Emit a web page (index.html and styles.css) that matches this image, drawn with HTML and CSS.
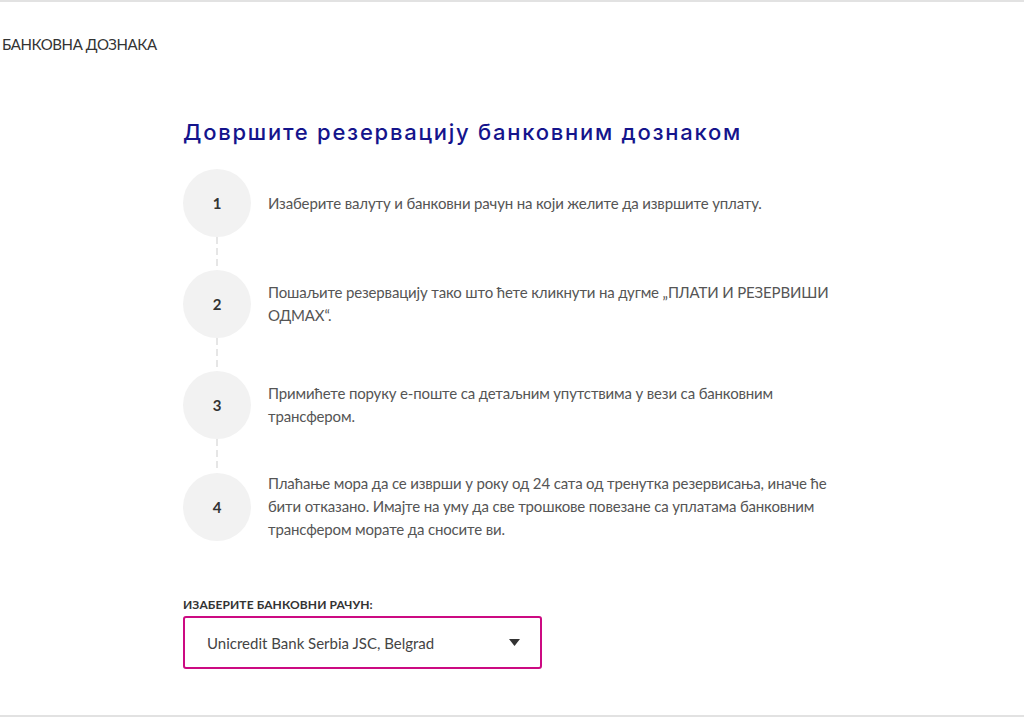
FILE: index.html
```html
<!DOCTYPE html>
<html lang="sr">
<head>
<meta charset="utf-8">
<title>Банковна дозника</title>
<link rel="stylesheet" href="styles.css">
</head>
<body>
<div class="page">
  <div class="tab-title">БАНКОВНА ДОЗНАКА</div>
  <main class="content">
    <h1 class="heading">Довршите резервацију банковним дознаком</h1>
    <div class="steps">
      <div class="step">
        <div class="circle">1</div>
        <p class="step-text">Изаберите валуту и банковни рачун на који желите да извршите уплату.</p>
      </div>
      <div class="connector"></div>
      <div class="step">
        <div class="circle">2</div>
        <p class="step-text">Пошаљите резервацију тако што ћете кликнути на дугме „ПЛАТИ И РЕЗЕРВИШИ ОДМАХ“.</p>
      </div>
      <div class="connector"></div>
      <div class="step">
        <div class="circle">3</div>
        <p class="step-text">Примићете поруку е-поште са детаљним упутствима у вези са банковним трансфером.</p>
      </div>
      <div class="connector"></div>
      <div class="step">
        <div class="circle">4</div>
        <p class="step-text">Плаћање мора да се изврши у року од 24 сата од тренутка резервисања, иначе ће бити отказано. Имајте на уму да све трошкове повезане са уплатама банковним трансфером морате да сносите ви.</p>
      </div>
    </div>
    <div class="field">
      <div class="field-label">ИЗАБЕРИТЕ БАНКОВНИ РАЧУН:</div>
      <div class="select">
        <span class="select-value">Unicredit Bank Serbia JSC, Belgrad</span>
        <svg class="caret" width="11" height="7" viewBox="0 0 11 7"><path d="M0 0H11L5.5 7Z" fill="#333"/></svg>
      </div>
    </div>
  </main>
</div>
</body>
</html>
```

FILE: styles.css
```css
* { box-sizing: border-box; }
html, body { margin: 0; padding: 0; background: #fff; }
body { font-family: Lato, "Noto Sans", sans-serif; color: #444; }

.page {
  height: 717px;
  border-top: 2px solid #e2e2e2;
  border-bottom: 2px solid #e2e2e2;
  overflow: hidden;
}

.tab-title {
  padding: 32px 0 0 2px;
  font-size: 15px;
  line-height: 20px;
  letter-spacing: -0.4px;
  color: #333;
}

.content {
  width: 658px;
  margin: 0 auto;
  padding-top: 65px;
}

.heading {
  margin: 0 0 24px 0;
  font-family: Inter, "Noto Sans", sans-serif;
  font-weight: 500;
  font-size: 22px;
  line-height: 26px;
  letter-spacing: 1.75px;
  color: #14148c;
}

.steps { display: flex; flex-direction: column; }

.step {
  display: flex;
  align-items: center;
  gap: 17px;
}

.circle {
  flex: 0 0 68px;
  width: 68px;
  height: 68px;
  border-radius: 50%;
  background: #f2f2f2;
  display: flex;
  align-items: center;
  justify-content: center;
  font-weight: 700;
  font-size: 15px;
  color: #333;
}

.step-text {
  margin: 0;
  font-size: 15px;
  line-height: 23px;
  letter-spacing: -0.15px;
  color: #555;
  max-width: 573px;
}

.connector {
  width: 2px;
  height: 33px;
  margin-left: 33px;
  background: repeating-linear-gradient(to bottom, #e6e6e6 0 7px, transparent 7px 11px);
}

.field { margin-top: 56px; }

.field-label {
  font-size: 12px;
  line-height: 16px;
  font-weight: 700;
  color: #333;
  letter-spacing: 0.1px;
}

.select {
  margin-top: 3px;
  width: 359px;
  height: 53px;
  border: 2px solid #cc0a82;
  border-radius: 3px;
  display: flex;
  align-items: center;
  justify-content: space-between;
  padding: 0 20px 0 22px;
}

.select-value { font-size: 15px; color: #444; }
.caret { display: block; }
```
